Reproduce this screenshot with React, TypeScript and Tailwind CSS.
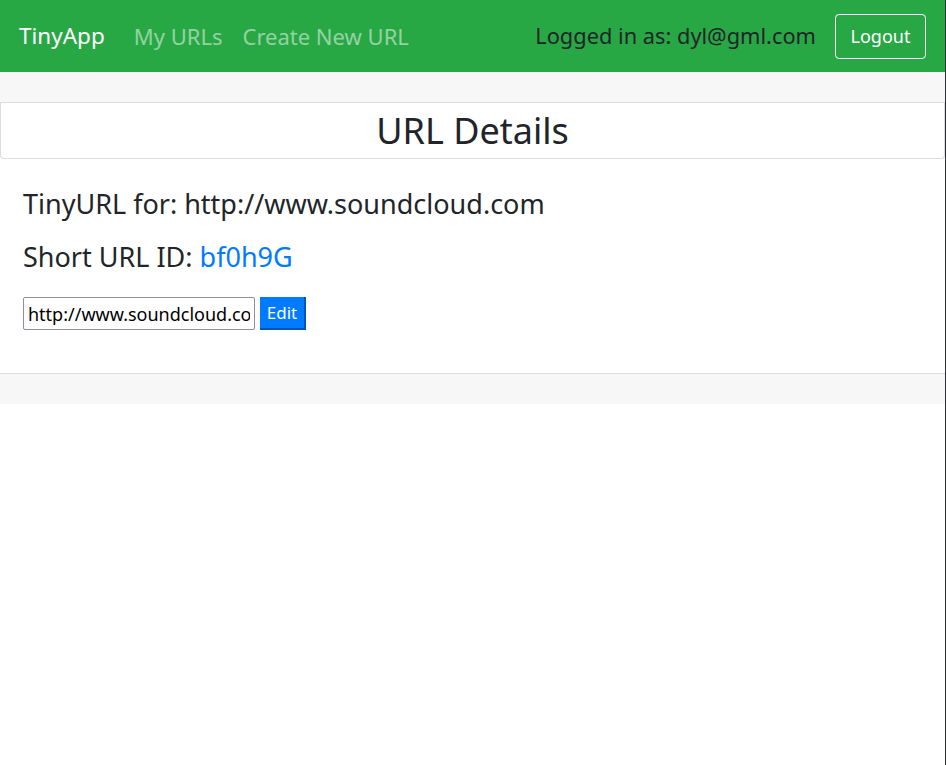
export default function App() {
  return (
    <div className="min-h-[765px] bg-white text-[#212529] font-['Noto_Sans',sans-serif] border-r border-[#2a2f36]">
      {/* Navbar */}
      <nav className="h-[72px] bg-[#28a745] flex items-center px-[19px]">
        <span className="text-[22.5px] text-white mr-[29px] leading-none">TinyApp</span>
        <a className="text-[22px] text-white/50 mr-[20px] leading-none" href="#">My URLs</a>
        <a className="text-[22px] text-white/50 leading-none" href="#">Create New URL</a>
        <div className="ml-auto flex items-center gap-[19px]">
          <span className="text-[21.8px] text-[#212529] leading-none">Logged in as: dyl@gml.com</span>
          <button className="h-[45px] w-[91px] border border-white rounded-[4px] text-[18px] text-white">Logout</button>
        </div>
      </nav>

      {/* Card */}
      <div className="bg-[#f7f7f7] h-[31px] border-b border-[#dcdcdc]" />
      <div className="h-[56px] border border-t-0 border-[#dcdcdc] rounded-b-[4px] flex items-center justify-center">
        <h2 className="text-[36px] leading-none">URL Details</h2>
      </div>
      <div className="px-[23px] pt-[29px] pb-[43px] border-b border-[#dcdcdc]">
        <h4 className="text-[27px] leading-[32px]">TinyURL for: http://www.soundcloud.com</h4>
        <h4 className="text-[27px] leading-[32px] mt-[21px]">
          Short URL ID: <a className="text-[#007bff]" href="#">bf0h9G</a>
        </h4>
        <form className="flex items-center gap-[5px] mt-[24px]">
          <input
            className="w-[232px] h-[33px] border border-[#8f8f9d] rounded-[2px] px-[4px] text-[18px] text-black"
            defaultValue="http://www.soundcloud.com"
          />
          <button type="button" className="h-[33px] w-[46px] bg-[#007bff] text-white text-[17px] border-b-2 border-r-2 border-[#0056b3]">
            Edit
          </button>
        </form>
      </div>
      <div className="bg-[#f7f7f7] h-[30px]" />
    </div>
  );
}
